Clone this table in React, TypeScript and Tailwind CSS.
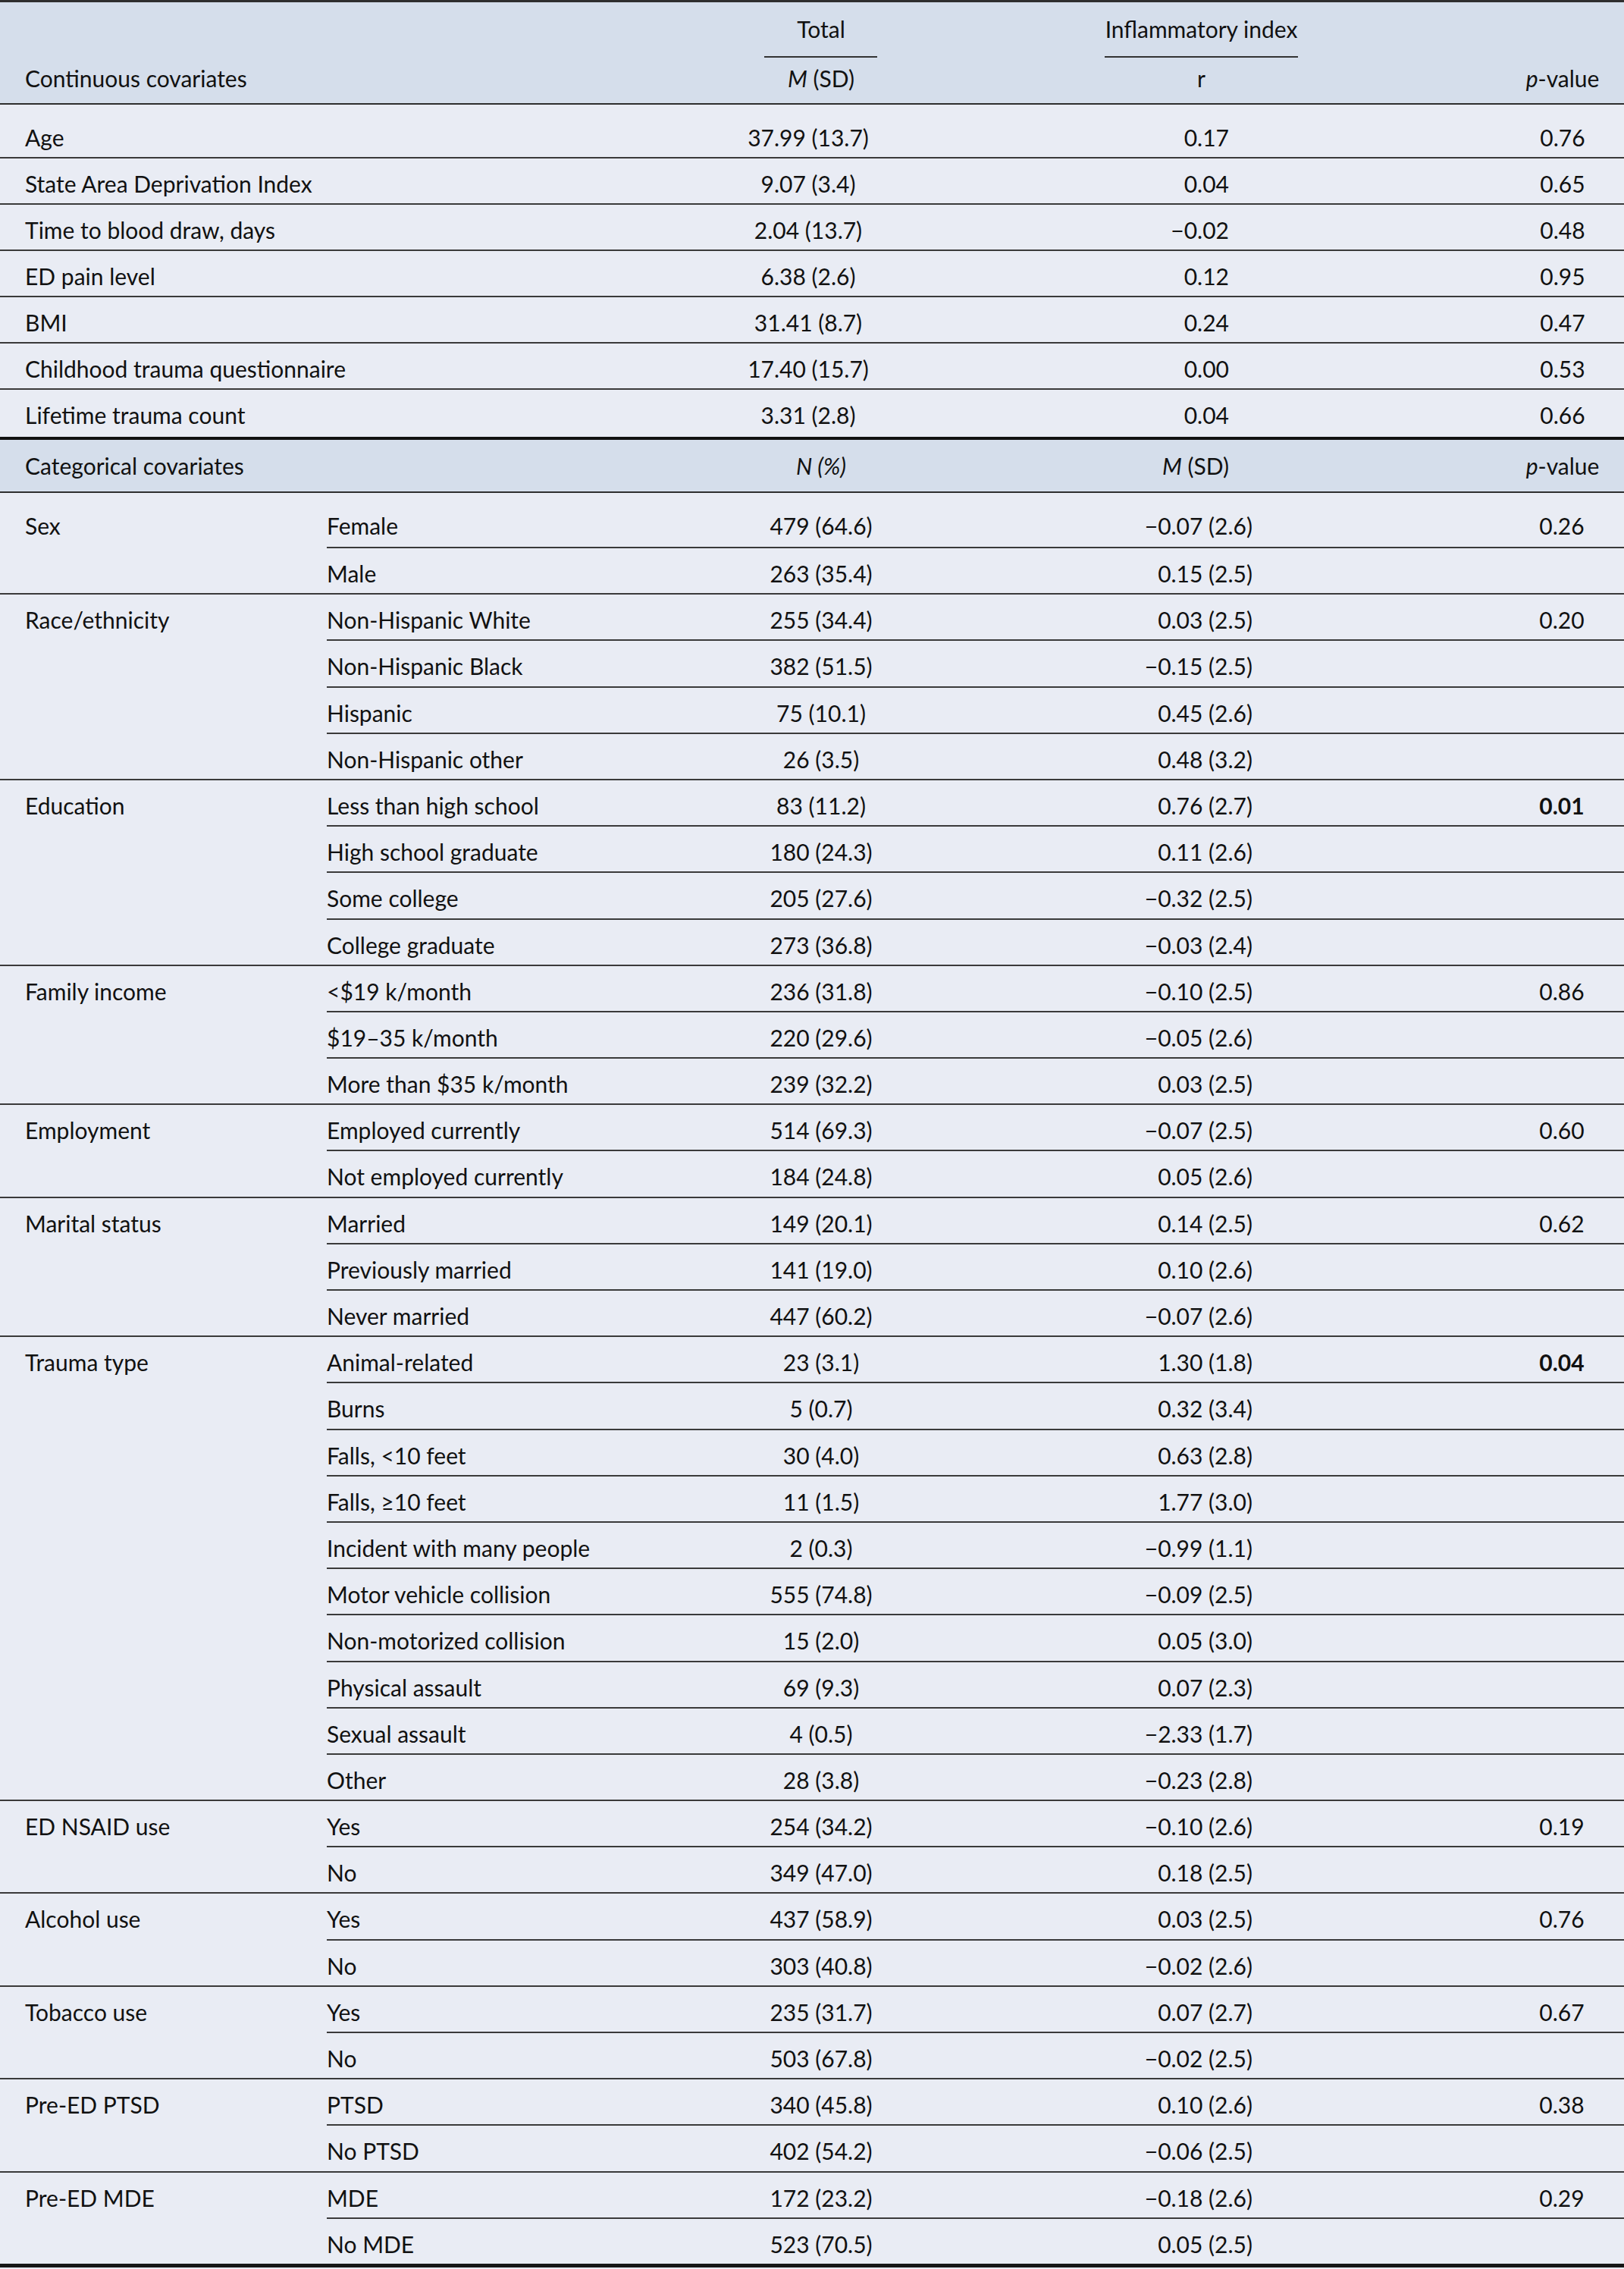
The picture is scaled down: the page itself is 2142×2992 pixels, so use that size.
import React from 'react';

type Row = [string, string, string];
type Group = { label: string; p: string; bold?: boolean; rows: Row[] };

const continuous: [string, string, string, string][] = [
  ['Age', '37.99 (13.7)', '0.17', '0.76'],
  ['State Area Deprivation Index', '9.07 (3.4)', '0.04', '0.65'],
  ['Time to blood draw, days', '2.04 (13.7)', '\u22120.02', '0.48'],
  ['ED pain level', '6.38 (2.6)', '0.12', '0.95'],
  ['BMI', '31.41 (8.7)', '0.24', '0.47'],
  ['Childhood trauma questionnaire', '17.40 (15.7)', '0.00', '0.53'],
  ['Lifetime trauma count', '3.31 (2.8)', '0.04', '0.66'],
];

const groups: Group[] = [
  { label: 'Sex', p: '0.26', rows: [['Female', '479 (64.6)', '\u22120.07 (2.6)'], ['Male', '263 (35.4)', '0.15 (2.5)']] },
  {
    label: 'Race/ethnicity', p: '0.20', rows: [
      ['Non-Hispanic White', '255 (34.4)', '0.03 (2.5)'],
      ['Non-Hispanic Black', '382 (51.5)', '\u22120.15 (2.5)'],
      ['Hispanic', '75 (10.1)', '0.45 (2.6)'],
      ['Non-Hispanic other', '26 (3.5)', '0.48 (3.2)'],
    ],
  },
  {
    label: 'Education', p: '0.01', bold: true, rows: [
      ['Less than high school', '83 (11.2)', '0.76 (2.7)'],
      ['High school graduate', '180 (24.3)', '0.11 (2.6)'],
      ['Some college', '205 (27.6)', '\u22120.32 (2.5)'],
      ['College graduate', '273 (36.8)', '\u22120.03 (2.4)'],
    ],
  },
  {
    label: 'Family income', p: '0.86', rows: [
      ['<$19 k/month', '236 (31.8)', '\u22120.10 (2.5)'],
      ['$19\u201335 k/month', '220 (29.6)', '\u22120.05 (2.6)'],
      ['More than $35 k/month', '239 (32.2)', '0.03 (2.5)'],
    ],
  },
  {
    label: 'Employment', p: '0.60', rows: [
      ['Employed currently', '514 (69.3)', '\u22120.07 (2.5)'],
      ['Not employed currently', '184 (24.8)', '0.05 (2.6)'],
    ],
  },
  {
    label: 'Marital status', p: '0.62', rows: [
      ['Married', '149 (20.1)', '0.14 (2.5)'],
      ['Previously married', '141 (19.0)', '0.10 (2.6)'],
      ['Never married', '447 (60.2)', '\u22120.07 (2.6)'],
    ],
  },
  {
    label: 'Trauma type', p: '0.04', bold: true, rows: [
      ['Animal-related', '23 (3.1)', '1.30 (1.8)'],
      ['Burns', '5 (0.7)', '0.32 (3.4)'],
      ['Falls, <10 feet', '30 (4.0)', '0.63 (2.8)'],
      ['Falls, \u226510 feet', '11 (1.5)', '1.77 (3.0)'],
      ['Incident with many people', '2 (0.3)', '\u22120.99 (1.1)'],
      ['Motor vehicle collision', '555 (74.8)', '\u22120.09 (2.5)'],
      ['Non-motorized collision', '15 (2.0)', '0.05 (3.0)'],
      ['Physical assault', '69 (9.3)', '0.07 (2.3)'],
      ['Sexual assault', '4 (0.5)', '\u22122.33 (1.7)'],
      ['Other', '28 (3.8)', '\u22120.23 (2.8)'],
    ],
  },
  { label: 'ED NSAID use', p: '0.19', rows: [['Yes', '254 (34.2)', '\u22120.10 (2.6)'], ['No', '349 (47.0)', '0.18 (2.5)']] },
  { label: 'Alcohol use', p: '0.76', rows: [['Yes', '437 (58.9)', '0.03 (2.5)'], ['No', '303 (40.8)', '\u22120.02 (2.6)']] },
  { label: 'Tobacco use', p: '0.67', rows: [['Yes', '235 (31.7)', '0.07 (2.7)'], ['No', '503 (67.8)', '\u22120.02 (2.5)']] },
  { label: 'Pre-ED PTSD', p: '0.38', rows: [['PTSD', '340 (45.8)', '0.10 (2.6)'], ['No PTSD', '402 (54.2)', '\u22120.06 (2.5)']] },
  { label: 'Pre-ED MDE', p: '0.29', rows: [['MDE', '172 (23.2)', '\u22120.18 (2.6)'], ['No MDE', '523 (70.5)', '0.05 (2.5)']] },
];

export default function App() {
  return (
    <div className="w-[2142px] min-h-[2992px] bg-[#e9ecf4] text-[#111] text-[30px] leading-[36px] font-['Lato',sans-serif]">
      {/* continuous header */}
      <div className="flex h-[138px] bg-[#d5deeb] border-t-[3px] border-b-2 border-[#2e2e2e]">
        <div className="w-[966px] pl-[33px] flex items-end pb-[15px]">Continuous covariates</div>
        <div className="w-[234px] pt-[17px]">
          <div className="text-center">Total</div>
          <div className="ml-[42px] w-[149px] h-[2px] bg-[#333] mt-[18px]"></div>
          <div className="text-center mt-[9px]"><i>M</i> (SD)</div>
        </div>
        <div className="w-[780px] pt-[17px]">
          <div className="ml-[257px] w-[255px] text-center">Inflammatory index</div>
          <div className="ml-[257px] w-[255px] h-[2px] bg-[#333] mt-[18px]"></div>
          <div className="ml-[257px] w-[255px] text-center mt-[9px]">r</div>
        </div>
        <div className="w-[162px] flex items-end justify-center pb-[15px]"><span><i>p</i>-value</span></div>
      </div>

      {continuous.map((r, i) => {
        const first = i === 0;
        const last = i === continuous.length - 1;
        return (
          <div key={r[0]} className={`flex border-[#3a3a3a] ${first ? 'h-[71px] pt-[25px] border-b-2' : last ? 'h-[62px] pt-[15px]' : 'h-[61px] pt-[15px] border-b-2'}`}>
            <div className="w-[966px] pl-[33px]">{r[0]}</div>
            <div className="w-[234px] text-center pr-[34px]">{r[1]}</div>
            <div className="w-[780px] text-right pr-[359px]">{r[2]}</div>
            <div className="w-[162px] text-center">{r[3]}</div>
          </div>
        );
      })}

      {/* categorical header */}
      <div className="flex h-[74px] pt-[16px] bg-[#d5deeb] border-t-4 border-b-2 border-t-[#111] border-b-[#2e2e2e]">
        <div className="w-[966px] pl-[33px]">Categorical covariates</div>
        <div className="w-[234px] text-center italic">N (%)</div>
        <div className="w-[780px] text-right pr-[359px]"><i>M</i> (SD)</div>
        <div className="w-[162px] text-center"><i>p</i>-value</div>
      </div>

      {groups.map((g, gi) => {
        const lastGroup = gi === groups.length - 1;
        return (
          <div key={g.label} className={`flex ${lastGroup ? 'border-b-[5px] border-[#161616]' : 'border-b-2 border-[#3a3a3a]'}`}>
            <div className={`w-[431px] pl-[33px] ${gi === 0 ? 'pt-[25px]' : 'pt-[15px]'}`}>{g.label}</div>
            <div className="flex-1 flex flex-col">
              {g.rows.map((r, ri) => {
                const lastRow = ri === g.rows.length - 1;
                const top = gi === 0 && ri === 0;
                let h = lastRow ? 'h-[59.2px]' : 'h-[61.2px] border-b-2 border-[#3a3a3a]';
                if (top) h = 'h-[73px] border-b-2 border-[#3a3a3a]';
                return (
                  <div key={r[0]} className={`flex ${h} ${top ? 'pt-[25px]' : 'pt-[15px]'}`}>
                    <div className="w-[535px]">{r[0]}</div>
                    <div className="w-[234px] text-center">{r[1]}</div>
                    <div className="w-[780px] text-right pr-[328px]">{r[2]}</div>
                    <div className={`w-[160px] text-center ${g.bold ? 'font-bold' : ''}`}>{ri === 0 ? g.p : ''}</div>
                  </div>
                );
              })}
            </div>
          </div>
        );
      })}
    </div>
  );
}
